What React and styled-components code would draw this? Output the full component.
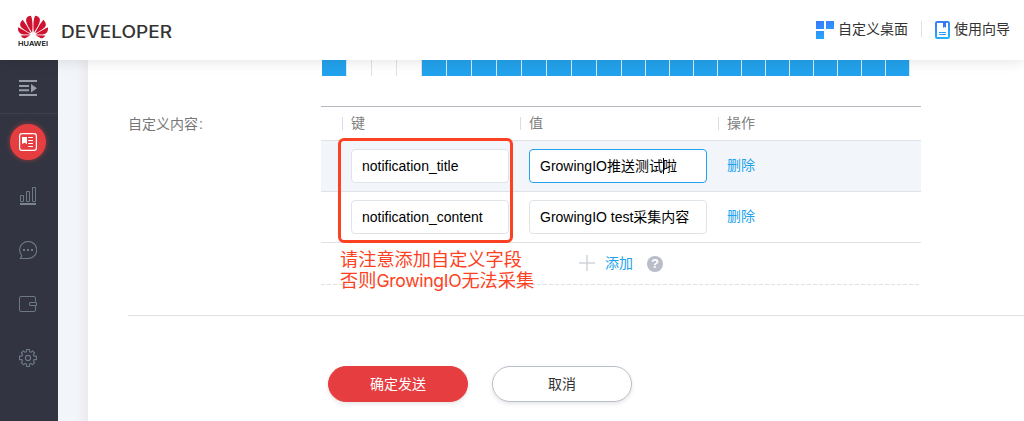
import React from "react";
import styled, { createGlobalStyle, css } from "styled-components";
import { SiHuawei } from "react-icons/si";

const Global = createGlobalStyle`
  *, *::before, *::after { box-sizing: border-box; }
  body {
    margin: 0;
    background: #fff;
    color: #333;
    font: 14px/20px "Liberation Sans", "Noto Sans CJK SC", sans-serif;
  }
`;

const Page = styled.div`
  display: flex;
  flex-direction: column;
  height: 421px;
  overflow: hidden;
`;

const Header = styled.header`
  flex: none;
  z-index: 2;
  display: flex;
  justify-content: space-between;
  height: 60px;
  padding: 0 14px 0 18px;
  background: #fff;
  box-shadow: 0 0 14px rgba(0, 0, 0, 0.13);
`;

const Brand = styled.div`
  display: flex;
  gap: 13px;
`;

const LogoMark = styled.div`
  display: flex;
  flex-direction: column;
  width: 30px;
  padding-top: 12px;
  color: #cf1230;

  svg { display: block; flex: none; }
`;

const LogoName = styled.svg`
  width: 30px;
  height: 8px;
  margin-top: -2px;
  overflow: visible;
`;

const Wordmark = styled.svg`
  width: 112px;
  height: 60px;
`;

const Tools = styled.nav`
  display: flex;
  align-items: center;
`;

const Tool = styled.a`
  display: flex;
  align-items: center;
  gap: 4px;
  color: #333;

  svg { display: block; }
  span { margin-top: -2px; }
`;

const ToolDivider = styled.i`
  width: 1px;
  height: 16px;
  margin: -3px 13px 0;
  background: #e0e0e2;
`;

const Body = styled.div`
  flex: 1;
  display: flex;
  min-height: 0;
`;

const Sidebar = styled.aside`
  flex: none;
  width: 58px;
  background: #323541;
`;

const SideToggle = styled.div`
  display: flex;
  align-items: center;
  justify-content: center;
  height: 54px;
  padding-top: 3px;
  padding-right: 2px;
  border-bottom: 1px solid #3d404c;
  margin-bottom: 1px;
`;

const SideItem = styled.div`
  display: flex;
  align-items: center;
  justify-content: center;
  width: 56px;
  height: 54px;
`;

const SideIcon = styled.div`
  display: flex;
  align-items: center;
  justify-content: center;
  width: 36px;
  height: 36px;
  border-radius: 50%;
  ${(p) =>
    p.$active &&
    css`
      background: #e63e40;
      box-shadow: 0 0 5px rgba(230, 62, 64, 0.6);
    `}
`;

const Gutter = styled.div`
  flex: none;
  width: 30px;
  background: linear-gradient(90deg, #f2f6fa 0 55%, #eff1f5 78%, #ebebee);
`;

const Main = styled.main`
  flex: 1;
  min-width: 0;
  padding-left: 40px;
`;

const FormRow = styled.section`
  display: flex;
  height: 256px;
  border-bottom: 1px solid #dfdfe1;
`;

const FieldLabel = styled.div`
  width: 193px;
  padding-top: 54px;
  color: #777;

  span { margin-left: 1px; }
`;

const Field = styled.div`
  position: relative;
  width: 600px;
`;

const Hours = styled.div`
  display: flex;
  height: 16px;
  padding-left: 1px;
`;

const Hour = styled.i`
  flex: none;
  width: ${(p) => p.$width}px;
  border-right: 1px solid ${(p) => (p.$on ? "#d7eaf7" : "#dfe2e7")};
  background: ${(p) => (p.$on ? "#22a2ec" : "transparent")};
`;

const Table = styled.div`
  margin-top: 30px;
  border-top: 1px solid #b5b9c2;
`;

const columns = css`
  display: grid;
  grid-template-columns: 178px 198px 1fr;
  padding-left: 21px;
`;

const HeadRow = styled.div`
  ${columns}
  height: 34px;
  border-bottom: 1px solid #e0e2e5;
`;

const HeadCell = styled.div`
  display: flex;
  align-items: center;
  gap: 8px;
  color: #808080;
  padding-bottom: 1px;

  &::before {
    content: "";
    width: 1px;
    height: 13px;
    background: #dddde0;
  }
`;

const Row = styled.div`
  ${columns}
  height: 51px;
  padding-top: 8px;
  border-bottom: 1px solid #e0e2e5;
  background: ${(p) => (p.$current ? "#f2f6fb" : "#fff")};
`;

const Cell = styled.div`
  padding-left: 9px;
`;

const Input = styled.div`
  display: flex;
  align-items: center;
  width: ${(p) => p.$width}px;
  height: 34px;
  padding-left: 10px;
  border: 1px solid ${(p) => (p.$focus ? "#22a2ec" : "#dfe4e9")};
  border-radius: 4px;
  background: #fff;
  color: #000;
  white-space: pre;
`;

const Caret = styled.i`
  width: 1px;
  height: 16px;
  margin-right: -1px;
  background: #000;
`;

const Link = styled.a`
  display: inline-block;
  padding-top: 6px;
  color: #22a2ec;
`;

const AddRow = styled.div`
  display: flex;
  align-items: center;
  height: 41px;
  padding-left: 258px;

  svg { margin-top: -2px; }
`;

const AddLabel = styled.a`
  margin: -2px 14px 0 10px;
  color: #22a2ec;
`;

const Help = styled.span`
  display: flex;
  align-items: center;
  justify-content: center;
  width: 16px;
  height: 16px;
  border-radius: 50%;
  background: #b9bdca;
  color: #fff;
  font-weight: 700;
  font-size: 13px;
`;

const DashedLine = styled.svg`
  display: block;
  width: 600px;
  height: 1px;
`;

const Highlight = styled.div`
  position: absolute;
  left: 17px;
  top: 78px;
  width: 175px;
  height: 105px;
  border: 3px solid #fc4223;
  border-radius: 6px;
`;

const Note = styled.div`
  position: absolute;
  left: 19px;
  top: 189px;
  color: #fc4223;
  font: 18.2px/21px Inter, "Noto Sans CJK SC", sans-serif;
  white-space: nowrap;

  span { font-size: 17.6px; letter-spacing: -0.3px; }
`;

const Actions = styled.div`
  display: flex;
  gap: 24px;
  padding: 50px 0 0 200px;
`;

const Button = styled.button`
  width: 140px;
  height: 36px;
  padding: 0;
  border: 1px solid ${(p) => (p.$primary ? "#e63e40" : "#b9bfca")};
  border-radius: 18px;
  background: ${(p) => (p.$primary ? "#e63e40" : "#fff")};
  color: ${(p) => (p.$primary ? "#fff" : "#333")};
  font: inherit;
  box-shadow: 0 2px 4px rgba(0, 0, 0, 0.1);
`;

const ToggleIcon = () => (
  <svg width="18" height="16" fill="#999da7">
    <path d="M0 0h18v2H0zM0 5h10v2H0zM0 9.3h10v2H0zM0 14h18v2H0zM12 4l6 4.2-6 4.2z" />
  </svg>
);

const NewsIcon = () => (
  <svg width="18" height="18" fill="none" stroke="#fff">
    <rect x=".6" y=".6" width="16.8" height="16.8" rx="2.4" strokeWidth="1.2" />
    <path d="M3 4h5v7l-2.5-1.2L3 11z" fill="#fff" stroke="none" />
    <path d="M9.3 4.5H14M9.3 7.5H14M9.3 10.5H14M9.3 13.5H14" />
  </svg>
);

const ChartIcon = () => (
  <svg width="18" height="18" fill="none" stroke="#6e7987">
    <path d="M1.5 8.5h3v6h-3zM7.5 4.5h3v10h-3zM13.5.5h3v14h-3z" />
    <path d="M1 17h16" strokeWidth="2" stroke="#7b8591" />
  </svg>
);

const ChatIcon = () => (
  <svg width="18" height="18" fill="none" stroke="#6e7987" strokeWidth="1.1">
    <path d="M9 17.5H1.2l1.6-2.4v-.5A8.5 8.5 0 1 1 9 17.5z" strokeLinejoin="round" />
    <path d="M4 8h2v2H4zM8 8h2v2H8zM12 8h2v2h-2z" fill="#6e7987" stroke="none" />
  </svg>
);

const WalletIcon = () => (
  <svg width="18" height="18" fill="none" stroke="#6e7987">
    <path d="M16.5 6.5V3a1.5 1.5 0 0 0-1.5-1.5H2A1.5 1.5 0 0 0 .5 3v12A1.5 1.5 0 0 0 2 16.5h13a1.5 1.5 0 0 0 1.5-1.5v-4.5" />
    <path d="M17.5 7.5h-6.5a.5.5 0 0 0-.5.5v2a.5.5 0 0 0 .5.5h6.5z" />
  </svg>
);

const GearIcon = () => (
  <svg width="18" height="18" fill="none" stroke="#6e7987" strokeWidth="1.1">
    <path
      strokeLinejoin="round"
      d="M7.5.5h3v2.2l1.4.6 1.6-1.4 2.1 2.1-1.3 1.7.6 1.4h2.6v3.5h-2.6l-.6 1.4 1.4 1.6-2.1 2.1-1.7-1.3-1.4.6v2.5h-3V15l-1.4-.6-1.7 1.3-2.1-2.1L3.6 12 3 10.6H.5V7.1H3l.6-1.4L2.3 4l2.1-2.1 1.7 1.4 1.4-.6z"
    />
    <circle cx="9" cy="9" r="2.6" />
  </svg>
);

const BlueGradient = ({ id, height }) => (
  <linearGradient id={id} gradientUnits="userSpaceOnUse" x1="0" y1="0" x2="8" y2={height}>
    <stop stopColor="#3b76fb" />
    <stop offset="1" stopColor="#22b4ff" />
  </linearGradient>
);

const DesktopIcon = () => (
  <svg width="18" height="18">
    <BlueGradient id="desk" height="22" />
    <path d="M0 0h8v8H0zM10 0h8v8h-8zM0 10h8v8H0z" fill="url(#desk)" />
  </svg>
);

const GuideIcon = () => (
  <svg width="15" height="18" fill="none">
    <BlueGradient id="guide" height="19" />
    <rect x="1" y="1" width="13" height="16" rx="1.2" stroke="url(#guide)" strokeWidth="2" />
    <path d="M8 1h3v6L9.5 5.7 8 7z" fill="#3976f5" />
    <path d="M4 11.5h7M4 13.5h7" stroke="#28a0fb" />
  </svg>
);

const hours = Array.from({ length: 24 }, (_, i) => ({
  on: i === 0 || i > 3,
  width: i < 12 ? 25 : 24,
}));

export default function App() {
  return (
    <Page>
      <Global />
      <Header>
        <Brand>
          <LogoMark>
            <SiHuawei size={30} />
            <LogoName>
              <text x="0" y="6" textLength="30" lengthAdjust="spacingAndGlyphs" fill="#111" fontFamily="Inter, sans-serif" fontWeight="600" fontSize="6.6">HUAWEI</text>
            </LogoName>
          </LogoMark>
          <Wordmark>
            <text x="0" y="38" textLength="111" lengthAdjust="spacingAndGlyphs" fill="#333" fontFamily="Inter, sans-serif" fontWeight="500" fontSize="16.8">DEVELOPER</text>
          </Wordmark>
        </Brand>
        <Tools>
          <Tool><DesktopIcon /><span>自定义桌面</span></Tool>
          <ToolDivider />
          <Tool><GuideIcon /><span>使用向导</span></Tool>
        </Tools>
      </Header>
      <Body>
        <Sidebar>
          <SideToggle><ToggleIcon /></SideToggle>
          <SideItem><SideIcon $active><NewsIcon /></SideIcon></SideItem>
          <SideItem><SideIcon><ChartIcon /></SideIcon></SideItem>
          <SideItem><SideIcon><ChatIcon /></SideIcon></SideItem>
          <SideItem><SideIcon><WalletIcon /></SideIcon></SideItem>
          <SideItem><SideIcon><GearIcon /></SideIcon></SideItem>
        </Sidebar>
        <Gutter />
        <Main>
          <FormRow>
            <FieldLabel>自定义内容<span>:</span></FieldLabel>
            <Field>
              <Hours>
                {hours.map((h, i) => <Hour key={i} $on={h.on} $width={h.width} />)}
              </Hours>
              <Table>
                <HeadRow>
                  <HeadCell>键</HeadCell>
                  <HeadCell>值</HeadCell>
                  <HeadCell>操作</HeadCell>
                </HeadRow>
                <Row $current>
                  <Cell><Input $width={158}>notification_title</Input></Cell>
                  <Cell><Input $width={178} $focus>GrowingIO推送测试<Caret />啦</Input></Cell>
                  <Cell><Link>删除</Link></Cell>
                </Row>
                <Row>
                  <Cell><Input $width={158}>notification_content</Input></Cell>
                  <Cell><Input $width={178}>GrowingIO test采集内容</Input></Cell>
                  <Cell><Link>删除</Link></Cell>
                </Row>
                <AddRow>
                  <svg width="16" height="16" stroke="#d0d3da" strokeWidth="1.5"><path d="M8 0v16M0 8h16" /></svg>
                  <AddLabel>添加</AddLabel>
                  <Help>?</Help>
                </AddRow>
                <DashedLine>
                  <path d="M0 .5h600" stroke="#dfe0e2" strokeDasharray="4 2" />
                </DashedLine>
              </Table>
              <Highlight />
              <Note>请注意添加自定义字段<br />否则<span>GrowingIO</span>无法采集</Note>
            </Field>
          </FormRow>
          <Actions>
            <Button $primary>确定发送</Button>
            <Button>取消</Button>
          </Actions>
        </Main>
      </Body>
    </Page>
  );
}
